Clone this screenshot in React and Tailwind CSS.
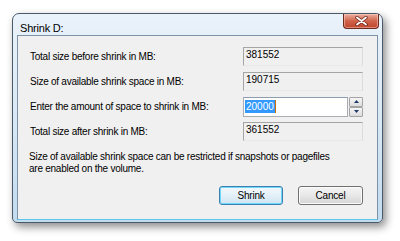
import React from "react";

const font = { fontFamily: '"Liberation Sans", Arial, sans-serif' };

function ReadOnly({ value }) {
  return (
    <div className="w-[120px] h-[19px] border-t border-l border-t-[#a5a5a5] border-l-[#a5a5a5] border-r border-b border-r-[#dcdcdc] border-b-[#e8e8e8] bg-[#f0f0f0] pl-[2px] pt-[1px] text-[10px] leading-[11px] text-black">
      {value}
    </div>
  );
}

function Row({ label, children }) {
  return (
    <div className="flex items-center h-[19px]">
      <div className="w-[225px] pl-[12px] text-[10px] tracking-[-0.25px] text-black">{label}</div>
      {children}
    </div>
  );
}

export default function App() {
  return (
    <div className="w-[400px] h-[241px] bg-white pt-[13px] pl-[12px]" style={font}>
      <div className="w-[371px] h-[210px] rounded-t-[7px] rounded-b-[5px] border border-[#4a5a6a] bg-gradient-to-b from-[#eaf2fa] via-[#d8e8f5] to-[#c2dbef] shadow-[3px_4px_9px_rgba(0,0,0,0.45)] flex flex-col">
        <div className="h-[21px] flex items-start justify-between">
          <div className="pl-[7px] pt-[6px] text-[11px] tracking-[-0.2px] text-black">Shrink D:</div>
          <div className="mr-[3px] w-[36px] h-[15px] rounded-b-[4px] border border-t-0 border-[#6b2a1c] bg-gradient-to-b from-[#eab0a2] via-[#d0624a] to-[#c0452c] shadow-[inset_0_0_0_1px_rgba(255,210,200,0.5)] flex items-center justify-center">
            <svg width="13" height="10" viewBox="0 0 13 10">
              <path d="M2 1.5 L11 8.5 M11 1.5 L2 8.5" stroke="#6a2418" strokeWidth="3.4" strokeLinecap="round" />
              <path d="M2 1.5 L11 8.5 M11 1.5 L2 8.5" stroke="#ffffff" strokeWidth="1.8" strokeLinecap="round" />
            </svg>
          </div>
        </div>
        <div className="mx-[4px] mb-[2px] flex-1 border border-[#7d92a8] border-b-[#5ec8ec] bg-[#f0f0f0] pt-[11px] flex flex-col">
          <div className="flex flex-col gap-[6px]">
            <Row label="Total size before shrink in MB:"><ReadOnly value="381552" /></Row>
            <Row label="Size of available shrink space in MB:"><ReadOnly value="190715" /></Row>
            <Row label="Enter the amount of space to shrink in MB:">
              <div className="flex h-[20px] w-[120px]">
                <div className="flex-1 h-[20px] border border-[#abadb3] border-t-[#8e9cb0] bg-white flex items-center pl-[1px]">
                  <span className="bg-[#3399ff] text-white text-[10px] leading-[13px] px-[1px]">20000</span>
                  <span className="w-[1px] h-[13px] bg-[#d07000]"></span>
                </div>
                <div className="w-[15px] flex flex-col pl-[1px]">
                  <div className="h-[10px] border border-[#a4a4a4] rounded-[1px] bg-gradient-to-b from-[#f6f6f6] to-[#dcdcdc] flex items-center justify-center">
                    <svg width="5" height="3" viewBox="0 0 5 3"><path d="M0 3 L2.5 0 L5 3 Z" fill="#1f3a6b" /></svg>
                  </div>
                  <div className="h-[10px] border border-[#a4a4a4] rounded-[1px] bg-gradient-to-b from-[#f6f6f6] to-[#dcdcdc] flex items-center justify-center">
                    <svg width="5" height="3" viewBox="0 0 5 3"><path d="M0 0 L2.5 3 L5 0 Z" fill="#1f3a6b" /></svg>
                  </div>
                </div>
              </div>
            </Row>
            <Row label="Total size after shrink in MB:"><ReadOnly value="361552" /></Row>
          </div>
          <div className="mt-[10px] pl-[11px] text-[10px] leading-[12px] tracking-[-0.25px] text-black">
            Size of available shrink space can be restricted if snapshots or pagefiles
            <br />
            are enabled on the volume.
          </div>
          <div className="mt-[11px] flex pl-[201px] gap-[15px]">
            <div className="w-[64px] h-[19px] rounded-[3px] border border-[#3c7fb1] shadow-[inset_0_0_0_1px_#6fd7f8] bg-gradient-to-b from-[#f2f8fc] via-[#e4f0f8] to-[#cfe5f2] flex items-center justify-center text-[10px] tracking-[-0.2px] text-black">
              Shrink
            </div>
            <div className="w-[65px] h-[19px] rounded-[3px] border border-[#707070] shadow-[inset_0_0_0_1px_#fbfbfb] bg-gradient-to-b from-[#f4f4f4] via-[#e8e8e8] to-[#d4d4d4] flex items-center justify-center text-[10px] tracking-[-0.2px] text-black">
              Cancel
            </div>
          </div>
        </div>
      </div>
    </div>
  );
}
